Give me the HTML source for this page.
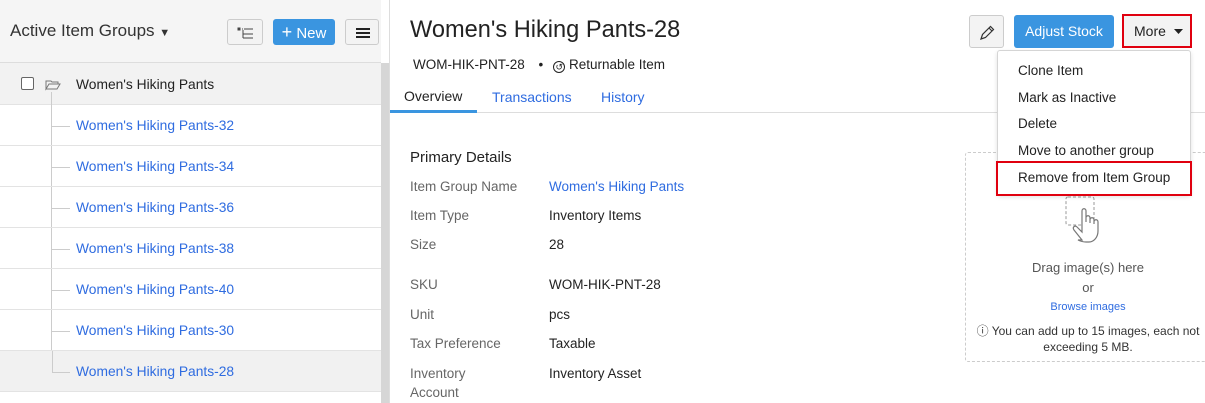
<!DOCTYPE html>
<html><head><style>
*{box-sizing:border-box;margin:0;padding:0}
body{width:1205px;height:403px;overflow:hidden;font-family:"Liberation Sans",sans-serif;background:#fff;color:#222;position:relative;font-size:13px}
.abs{position:absolute}
.lhead{left:0;top:0;width:381px;height:63px;background:#f5f5f5;border-bottom:1px solid #ddd}
.btn{position:absolute;border:1px solid #ccc;border-radius:3px;background:#f3f3f3}
.row{position:absolute;left:0;width:381px;height:41px;border-bottom:1px solid #e3e3e3}
.row a{position:absolute;left:76px;top:13px;color:#2f6ce0;font-size:13.8px;text-decoration:none}
.hl{position:absolute;left:52px;width:18px;border-top:1px solid #ccc;top:21px}
.lbl{position:absolute;left:410px;color:#666;font-size:13.5px}
.val{position:absolute;left:549px;color:#222;font-size:13.5px}
.menu div{position:absolute;left:20px;font-size:13.5px;color:#222}
</style></head><body>
<div class="abs lhead"></div>
<div class="abs" style="left:10px;top:21px;font-size:17px;color:#333">Active Item Groups <span style="font-size:11px">▼</span></div>
<div class="btn" style="left:227px;top:19px;width:36px;height:26px"><svg width="36" height="26"><g stroke="#444" stroke-width="1"><rect x="10" y="8" width="2" height="2" fill="#444"/><line x1="14" y1="9" x2="15" y2="9"/><line x1="16" y1="9" x2="25" y2="9"/><line x1="15" y1="10" x2="15" y2="18"/><line x1="15" y1="14" x2="25" y2="14"/><line x1="15" y1="18" x2="25" y2="18"/></g></svg></div>
<div class="abs" style="left:273px;top:19px;width:62px;height:26px;background:#3a95e0;border-radius:3px;color:#fff;font-size:15px;line-height:26px;text-align:center"><span style="font-size:18px">+</span> New</div>
<div class="btn" style="left:345px;top:19px;width:34px;height:26px"><div style="position:absolute;left:10px;top:8px;width:14px;height:2px;background:#222;box-shadow:0 4px 0 #222,0 8px 0 #222"></div></div>
<div class="abs" style="left:381px;top:63px;width:8px;height:340px;background:#d6d6d6"></div>
<div class="abs" style="left:389px;top:0;width:1px;height:403px;background:#ddd"></div>
<div class="row" style="top:63px;height:42px;background:#f2f2f2"><div style="position:absolute;left:21px;top:14px;width:13px;height:13px;border:1px solid #666;border-radius:2px;background:#fff"></div><svg style="position:absolute;left:45px;top:16px" width="16" height="12"><path d="M1 2h5l1 1h6v2H4L1 10z M1 10L4 5h11l-3 5z" fill="none" stroke="#777"/></svg><span style="position:absolute;left:76px;top:14px;font-size:13.8px">Women's Hiking Pants</span></div>
<div class="abs" style="left:51px;top:92px;width:1px;height:280px;background:#ccc"></div>
<div class="row" style="top:105px"><div class="hl"></div><a>Women's Hiking Pants-32</a></div>
<div class="row" style="top:146px"><div class="hl"></div><a>Women's Hiking Pants-34</a></div>
<div class="row" style="top:187px"><div class="hl"></div><a>Women's Hiking Pants-36</a></div>
<div class="row" style="top:228px"><div class="hl"></div><a>Women's Hiking Pants-38</a></div>
<div class="row" style="top:269px"><div class="hl"></div><a>Women's Hiking Pants-40</a></div>
<div class="row" style="top:310px"><div class="hl"></div><a>Women's Hiking Pants-30</a></div>
<div class="row" style="top:351px;background:#f1f1f1"><div class="hl"></div><a>Women's Hiking Pants-28</a></div>
<div class="abs" style="left:52px;top:351px;width:1px;height:21px;background:#ccc"></div>

<div class="abs" style="left:410px;top:17px;font-size:23.6px;color:#222">Women's Hiking Pants-28</div>
<div class="abs" style="left:413px;top:57px;font-size:13.5px">WOM-HIK-PNT-28 <span style="margin:0 10px">•</span><span style="display:inline-block;width:12px;height:12px;border:1px solid #222;border-radius:50%;font-size:9px;text-align:center;line-height:11px;vertical-align:-1px">↺</span> Returnable Item</div>
<div class="abs" style="left:390px;top:112px;width:815px;height:1px;background:#ddd"></div>
<div class="abs" style="left:390px;top:110px;width:87px;height:3px;background:#3a95e0"></div>
<div class="abs" style="left:404px;top:88px;font-size:14px;color:#222">Overview</div>
<div class="abs" style="left:492px;top:89px;font-size:14px;color:#2f6ce0">Transactions</div>
<div class="abs" style="left:601px;top:89px;font-size:14px;color:#2f6ce0">History</div>

<div class="btn" style="left:969px;top:15px;width:35px;height:33px"><svg width="35" height="33"><path d="M11 23l1.5-4.5 8-8 3 3-8 8z M19 12l3 3" fill="none" stroke="#333" stroke-width="1.2"/></svg></div>
<div class="abs" style="left:1014px;top:15px;width:100px;height:33px;background:#3a95e0;border-radius:3px;color:#fff;font-size:14px;line-height:33px;text-align:center">Adjust Stock</div>
<div class="abs" style="left:1122px;top:14px;width:70px;height:34px;border:2px solid #e0000f;background:#f3f3f3;font-size:14px;line-height:30px;padding-left:10px">More<svg style="position:absolute;left:50px;top:13px" width="9" height="5"><path d="M0 0h9L4.5 5z" fill="#222"/></svg></div>
<div class="abs" style="left:410px;top:149px;font-size:15px">Primary Details</div>
<div class="lbl" style="top:179px">Item Group Name</div><div class="val" style="top:179px;color:#2f6ce0">Women's Hiking Pants</div>
<div class="lbl" style="top:208px">Item Type</div><div class="val" style="top:208px">Inventory Items</div>
<div class="lbl" style="top:237px">Size</div><div class="val" style="top:237px">28</div>
<div class="lbl" style="top:277px">SKU</div><div class="val" style="top:277px">WOM-HIK-PNT-28</div>
<div class="lbl" style="top:307px">Unit</div><div class="val" style="top:307px">pcs</div>
<div class="lbl" style="top:336px">Tax Preference</div><div class="val" style="top:336px">Taxable</div>
<div class="lbl" style="top:364px;line-height:19px">Inventory<br>Account</div><div class="val" style="top:366px">Inventory Asset</div>

<div class="abs" style="left:965px;top:152px;width:260px;height:210px;border:1px dashed #ccc;border-radius:3px"></div>
<svg class="abs" style="left:1060px;top:194px" width="60" height="55"><rect x="6" y="3" width="28" height="28" rx="2" fill="none" stroke="#999" stroke-dasharray="3 2"/><path d="M22 46l-8-10c-2-3 1-5 3-3l5 5V17c0-3 4-3 4 0v11v-4c0-3 4-3 4 0v5v-3c0-3 4-3 4 0v4v-2c0-3 4-3 4 0v9c0 6-4 11-9 11h-3c-3 0-6-1-8-2z" fill="#fff" stroke="#777" stroke-width="1.2"/></svg>
<div class="abs" style="left:965px;width:246px;top:260px;text-align:center;color:#555;font-size:13px">Drag image(s) here</div>
<div class="abs" style="left:965px;width:246px;top:280px;text-align:center;color:#555;font-size:13px">or</div>
<div class="abs" style="left:965px;width:246px;top:301px;text-align:center;color:#2f6ce0;font-size:11px">Browse images</div>
<div class="abs" style="left:965px;width:246px;top:323px;text-align:center;color:#333;font-size:12px;line-height:16px">ⓘ You can add up to 15 images, each not exceeding 5 MB.</div>

<div class="abs menu" style="left:997px;top:50px;width:194px;height:145px;background:#fff;border:1px solid #d5d5d5;border-radius:3px;box-shadow:0 2px 5px rgba(0,0,0,.12)">
<div style="top:12px">Clone Item</div><div style="top:39px">Mark as Inactive</div><div style="top:65px">Delete</div><div style="top:92px">Move to another group</div>
</div>
<div class="abs" style="left:996px;top:161px;width:196px;height:35px;border:2px solid #e0000f;background:#fff"><span style="position:absolute;left:20px;top:7px;font-size:13.5px">Remove from Item Group</span></div>
</body></html>
